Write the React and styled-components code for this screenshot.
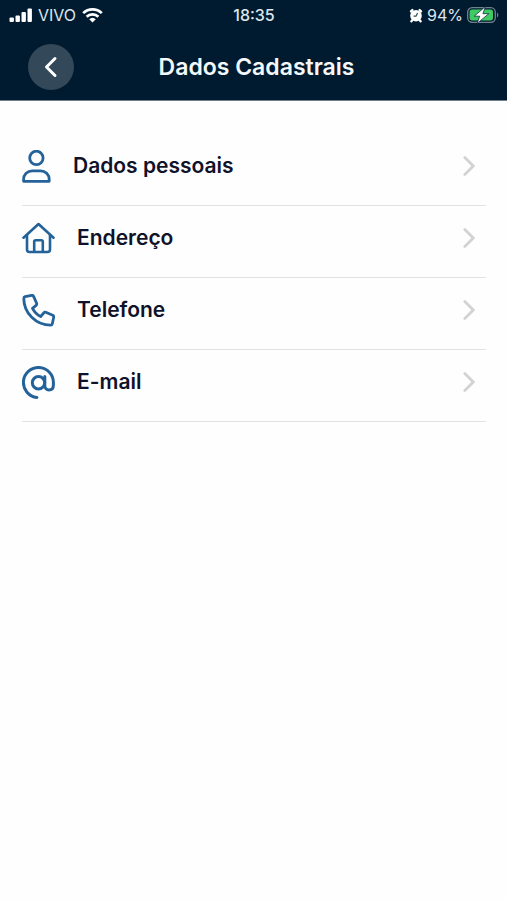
import React from "react";
import styled, { createGlobalStyle } from "styled-components";

const GlobalStyle = createGlobalStyle`
  * { box-sizing: border-box; }
  body {
    margin: 0;
    background: #fefefe;
    color: #10122a;
    font-family: Inter, "Liberation Sans", sans-serif;
  }
`;

const TopArea = styled.div`
  background: #001b30;
  color: #f4f8fb;
  border-bottom: 1px solid #6f7f8c;
`;

const StatusBar = styled.div`
  display: grid;
  grid-template-columns: 1fr auto 1fr;
  align-items: center;
  height: 30px;
  padding: 0 8px 0 9px;
  font-size: 16px;
  line-height: 20px;
  color: #dfe6ec;
`;

const StatusGroup = styled.div`
  display: flex;
  align-items: center;
  justify-content: ${({ $end }) => ($end ? "flex-end" : "flex-start")};
  gap: ${({ $end }) => ($end ? "4px" : "6px")};
`;

const Clock = styled.time`
  font-weight: 500;
`;

const Header = styled.header`
  display: grid;
  grid-template-columns: 46px 1fr 46px;
  align-items: center;
  height: 70px;
  padding: 4px 22px 0 28px;
`;

const BackButton = styled.button`
  display: flex;
  align-items: center;
  justify-content: center;
  width: 46px;
  height: 46px;
  padding: 0;
  border: 0;
  border-radius: 50%;
  background: #334859;
  color: #fff;
  cursor: pointer;
`;

const Title = styled.h1`
  margin: 0;
  text-align: center;
  font-size: 23px;
  line-height: 28px;
  font-weight: 600;
`;

const Menu = styled.ul`
  list-style: none;
  margin: 0;
  padding: 33px 21px 0 22px;
`;

const MenuItem = styled.li`
  padding-bottom: 7px;
  border-bottom: 1px solid #e3e3e5;
`;

const MenuLink = styled.a`
  display: flex;
  align-items: center;
  gap: 22px;
  height: 64px;
  padding-right: 11px;
  color: inherit;
  text-decoration: none;
`;

const MenuLabel = styled.span`
  flex: 1;
  font-size: 21px;
  line-height: 28px;
  font-weight: 600;
`;

const LineIcon = styled.svg`
  display: block;
  flex: none;
  fill: none;
  stroke: ${({ $color }) => $color || "#24629a"};
  stroke-width: ${({ $weight }) => $weight || 2.8};
  stroke-linecap: round;
  stroke-linejoin: round;
`;

const StatusIcon = styled.svg`
  display: block;
  flex: none;
`;

const SignalIcon = () => (
  <StatusIcon width="23" height="15" viewBox="0 0 23 15" fill="#fff" aria-hidden="true">
    <rect x="0.5" y="9.5" width="4.4" height="4.5" rx="1" />
    <rect x="6.5" y="7.5" width="4.4" height="6.5" rx="1" />
    <rect x="12.5" y="4" width="4.4" height="10" rx="1" />
    <rect x="18.5" y="0.5" width="4.4" height="13.5" rx="1" />
  </StatusIcon>
);

const WifiIcon = () => (
  <StatusIcon width="21" height="15" viewBox="0 0 21 15" fill="none" stroke="#fff" strokeWidth="2.6" aria-hidden="true">
    <path d="M1.2 5.2a13.2 13.2 0 0 1 18.6 0" />
    <path d="M4.6 8.8a8.4 8.4 0 0 1 11.8 0" />
    <path d="M10.5 14.6 7.2 11.2a4.8 4.8 0 0 1 6.6 0Z" fill="#fff" stroke="none" />
  </StatusIcon>
);

const AlarmIcon = () => (
  <StatusIcon width="14" height="15" viewBox="0 0 14 15" aria-hidden="true">
    <path d="M2 3.4 3.4 2M12 3.4 10.6 2M3.2 12.2l-.8 1M10.8 12.2l.8 1" stroke="#fff" strokeWidth="2.4" strokeLinecap="round" />
    <circle cx="7" cy="7.7" r="5.8" fill="#fff" />
    <path d="M8.6 5 7 8.2H4.6" fill="none" stroke="#34495a" strokeWidth="1.2" />
  </StatusIcon>
);

const BatteryIcon = () => (
  <StatusIcon width="32" height="18" viewBox="0 0 32 18" aria-hidden="true">
    <rect x="0.7" y="1.7" width="27.6" height="14.6" rx="4.5" fill="none" stroke="#71828f" strokeWidth="1.3" />
    <rect x="2.6" y="3.6" width="23.4" height="10.8" rx="2.6" fill="#3fcb63" />
    <path d="M30 6.5c1.8 1 1.8 4 0 5Z" fill="#71828f" />
    <path d="M18.4 .6 7.2 10.2h5.5l-2.6 7.2L21.8 7.7h-5.9Z" fill="#fff" stroke="#001b30" strokeWidth="0.7" />
  </StatusIcon>
);

const UserIcon = () => (
  <LineIcon width="29" height="33" viewBox="0 0 29 33" aria-hidden="true">
    <circle cx="14.4" cy="7.9" r="6.7" />
    <path d="M1.6 31.3v-1.7c0-5.3 3.7-8.8 8.8-8.8h8c5.1 0 8.8 3.5 8.8 8.8v1.7Z" />
  </LineIcon>
);

const HomeIcon = () => (
  <LineIcon width="33" height="33" viewBox="0 0 33 33" $weight={2.6} aria-hidden="true">
    <path d="M1.5 15.7 16.5 2l15 13.7" />
    <path d="M5 13.3v14.2c0 1.5 1 2.5 2.5 2.5h18c1.5 0 2.5-1 2.5-2.5V13.3" />
    <path d="M12.2 29.8V19.6c0-.9.5-1.4 1.4-1.4h5.8c.9 0 1.4.5 1.4 1.4v10.2" />
  </LineIcon>
);

const PhoneIcon = () => (
  <LineIcon width="33" height="33" viewBox="0 0 33 33" aria-hidden="true">
    <path d="M3.1 2.7 9.6 1.4c.9-.2 1.6.2 2 1l3 6.9c.3.8.1 1.5-.5 2l-3.6 3.1c2 3.9 4.4 6.3 8.2 8.1l3.1-3.7c.5-.6 1.2-.8 2-.5l6.9 2.9c.8.4 1.2 1.1 1 2l-1.4 6.5c-.2.9-.8 1.4-1.7 1.4C14 31.1 1.8 19 1.8 4.4c0-.9.4-1.5 1.3-1.7Z" />
  </LineIcon>
);

const AtIcon = () => (
  <LineIcon width="33" height="33" viewBox="0 0 33 33" $weight={3} aria-hidden="true">
    <path d="M14.9 31.4A15 15 0 1 1 31.4 16.4v2.6c0 3.1-1.8 5-4.4 5-2.4 0-4.2-1.7-4.2-4.4V10.6" />
    <circle cx="16.5" cy="16.7" r="6.2" />
  </LineIcon>
);

const ForwardChevron = () => (
  <LineIcon width="12" height="20" viewBox="0 0 12 20" $color="#d2d3d5" $weight={2.8} aria-hidden="true">
    <path d="m1.8 1.5 8.5 8.5-8.5 8.5" />
  </LineIcon>
);

const entries = [
  { id: "dados-pessoais", label: "Dados pessoais", Icon: UserIcon },
  { id: "endereco", label: "Endereço", Icon: HomeIcon },
  { id: "telefone", label: "Telefone", Icon: PhoneIcon },
  { id: "e-mail", label: "E-mail", Icon: AtIcon },
];

export default function App() {
  return (
    <>
      <GlobalStyle />
      <TopArea>
        <StatusBar>
          <StatusGroup>
            <SignalIcon />
            <span>VIVO</span>
            <WifiIcon />
          </StatusGroup>
          <Clock>18:35</Clock>
          <StatusGroup $end>
            <AlarmIcon />
            <span>94%</span>
            <BatteryIcon />
          </StatusGroup>
        </StatusBar>
        <Header>
          <BackButton type="button" aria-label="Voltar">
            <LineIcon width="14" height="22" viewBox="0 0 14 22" $color="#fff" $weight={3} aria-hidden="true">
              <path d="m11 2.5-8.5 8.5 8.5 8.5" />
            </LineIcon>
          </BackButton>
          <Title>Dados Cadastrais</Title>
        </Header>
      </TopArea>
      <main>
        <Menu>
          {entries.map(({ id, label, Icon }) => (
            <MenuItem key={id}>
              <MenuLink href={`#${id}`}>
                <Icon />
                <MenuLabel>{label}</MenuLabel>
                <ForwardChevron />
              </MenuLink>
            </MenuItem>
          ))}
        </Menu>
      </main>
    </>
  );
}
